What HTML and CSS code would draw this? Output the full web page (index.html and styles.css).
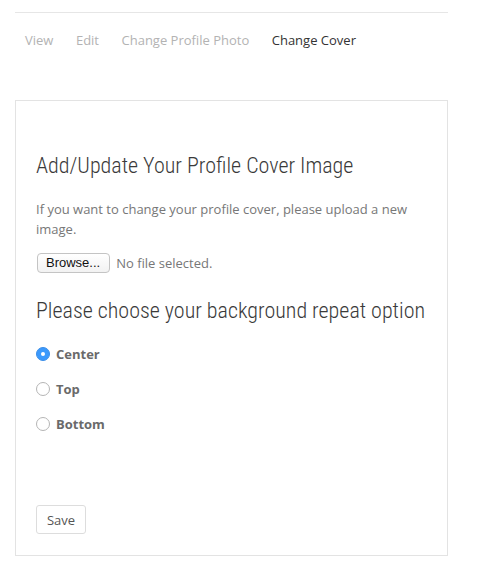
FILE: index.html
```html
<!DOCTYPE html>
<html>
<head>
<meta charset="utf-8">
<link rel="stylesheet" href="styles.css">
</head>
<body>
<div class="page">
  <nav class="tabs">
    <a class="tab">View</a>
    <a class="tab">Edit</a>
    <a class="tab">Change Profile Photo</a>
    <a class="tab active">Change Cover</a>
  </nav>
  <div class="card">
    <h2 class="title">Add/Update Your Profile Cover Image</h2>
    <p class="help">If you want to change your profile cover, please upload a new image.</p>
    <div class="file-row">
      <span class="browse">Browse...</span>
      <span class="nofile">No file selected.</span>
    </div>
    <h2 class="title title-2">Please choose your background repeat option</h2>
    <div class="options">
      <label class="option"><span class="radio checked"></span><span class="label">Center</span></label>
      <label class="option"><span class="radio"></span><span class="label">Top</span></label>
      <label class="option"><span class="radio"></span><span class="label">Bottom</span></label>
    </div>
    <button class="save">Save</button>
  </div>
</div>
</body>
</html>
```
FILE: styles.css
```css
html, body {
  margin: 0;
  padding: 0;
  background: #fff;
}
body {
  font-family: "Open Sans", "Liberation Sans", sans-serif;
  font-size: 13px;
  color: #777;
}
.page {
  margin-left: 15px;
  width: 433px;
  padding-top: 12px;
}
.tabs {
  border-top: 1px solid #e6e6e6;
  display: flex;
  gap: 22.5px;
  padding: 17px 0 0 10px;
  height: 20px;
  line-height: 20px;
}
.tab {
  color: #b3b3b3;
  text-decoration: none;
}
.tab.active {
  color: #333;
}
.card {
  margin-top: 50px;
  border: 1px solid #e3e3e3;
  padding: 20px 20px 20px 20px;
  height: 414px;
  box-sizing: content-box;
}
.title {
  font-family: "Roboto Condensed", "Roboto", "Liberation Sans", sans-serif;
  font-stretch: condensed;
  font-weight: 300;
  font-size: 22px;
  line-height: 26px;
  color: #3a3a3a;
  margin: 32px 0 0 0;
  white-space: nowrap;
}
.title-2 {
  margin-top: 25px;
}
.help {
  margin: 21px 0 0 0;
  line-height: 19.5px;
  color: #777;
}
.file-row {
  margin-top: 14px;
  display: flex;
  align-items: center;
  gap: 6px;
}
.browse {
  font-family: "Liberation Sans", sans-serif;
  font-size: 13px;
  color: #111;
  border: 1px solid #c4c4c4;
  border-radius: 4px;
  background: linear-gradient(#fff, #f2f2f2);
  height: 18px;
  line-height: 18px;
  padding: 0 9px 0 8px;
  margin-left: 1px;
}
.nofile {
  color: #777;
}
.options {
  margin-top: 20px;
  display: flex;
  flex-direction: column;
  gap: 15px;
}
.option {
  display: flex;
  align-items: center;
  height: 20px;
  gap: 6px;
}
.radio {
  width: 12px;
  height: 12px;
  border: 1px solid #b5b5b5;
  border-radius: 50%;
  background: #fff;
  box-sizing: content-box;
  position: relative;
}
.radio.checked {
  background: #3b99fc;
  border-color: #3b8ee8;
}
.radio.checked::after {
  content: "";
  position: absolute;
  width: 4px;
  height: 4px;
  background: #fff;
  border-radius: 50%;
  left: 4px;
  top: 4px;
}
.label {
  font-weight: 700;
  color: #6a6a6a;
}
.save {
  margin-top: 71px;
  font-family: "Open Sans", "Liberation Sans", sans-serif;
  font-size: 13px;
  color: #555;
  background: #fff;
  border: 1px solid #ddd;
  border-radius: 3px;
  width: 50px;
  height: 29px;
  padding: 0;
}
```
